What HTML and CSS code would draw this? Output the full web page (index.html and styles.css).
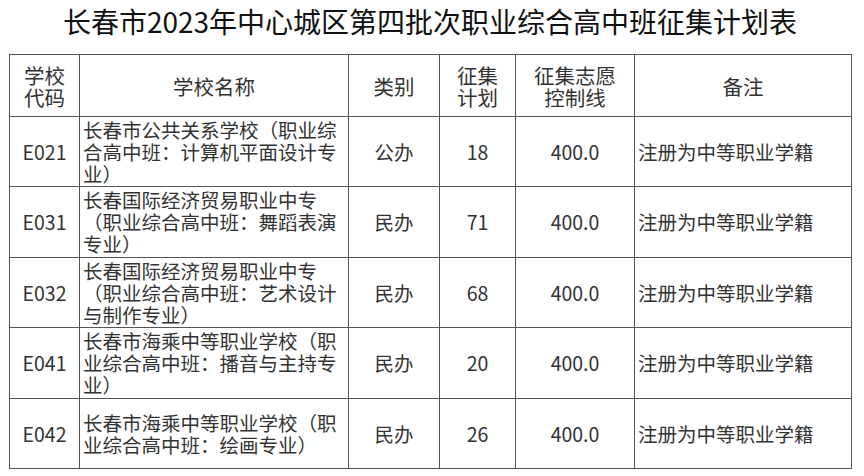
FILE: index.html
```html
<!DOCTYPE html>
<html lang="zh-CN">
<head>
<meta charset="utf-8">
<title>征集计划表</title>
<link rel="stylesheet" href="styles.css">
</head>
<body>
<div class="page">
  <h1 class="title">长春市2023年中心城区第四批次职业综合高中班征集计划表</h1>
  <table class="plan">
    <colgroup>
      <col class="c-code"><col class="c-name"><col class="c-type"><col class="c-plan"><col class="c-line"><col class="c-note">
    </colgroup>
    <thead>
      <tr class="head">
        <th>学校<br>代码</th>
        <th>学校名称</th>
        <th>类别</th>
        <th>征集<br>计划</th>
        <th>征集志愿<br>控制线</th>
        <th>备注</th>
      </tr>
    </thead>
    <tbody>
      <tr class="r-a">
        <td class="ctr">E021</td>
        <td class="name">长春市公共关系学校（职业综合高中班：计算机平面设计专业）</td>
        <td class="ctr">公办</td>
        <td class="ctr">18</td>
        <td class="ctr">400.0</td>
        <td class="note">注册为中等职业学籍</td>
      </tr>
      <tr class="r-b">
        <td class="ctr">E031</td>
        <td class="name">长春国际经济贸易职业中专（职业综合高中班：舞蹈表演专业）</td>
        <td class="ctr">民办</td>
        <td class="ctr">71</td>
        <td class="ctr">400.0</td>
        <td class="note">注册为中等职业学籍</td>
      </tr>
      <tr class="r-a">
        <td class="ctr">E032</td>
        <td class="name">长春国际经济贸易职业中专（职业综合高中班：艺术设计与制作专业）</td>
        <td class="ctr">民办</td>
        <td class="ctr">68</td>
        <td class="ctr">400.0</td>
        <td class="note">注册为中等职业学籍</td>
      </tr>
      <tr class="r-b">
        <td class="ctr">E041</td>
        <td class="name">长春市海乘中等职业学校（职业综合高中班：播音与主持专业）</td>
        <td class="ctr">民办</td>
        <td class="ctr">20</td>
        <td class="ctr">400.0</td>
        <td class="note">注册为中等职业学籍</td>
      </tr>
      <tr class="r-a">
        <td class="ctr">E042</td>
        <td class="name">长春市海乘中等职业学校（职业综合高中班：绘画专业）</td>
        <td class="ctr">民办</td>
        <td class="ctr">26</td>
        <td class="ctr">400.0</td>
        <td class="note">注册为中等职业学籍</td>
      </tr>
    </tbody>
  </table>
</div>
</body>
</html>
```
FILE: styles.css
```css
html, body {
  margin: 0;
  padding: 0;
  background: #fff;
}
body {
  font-family: "Noto Sans CJK SC", "Noto Sans", sans-serif;
  color: #333;
}
.page {
  width: 842px;
  margin-left: 9px;
}
.title {
  margin: 0 0 12px 0;
  font-size: 28px;
  line-height: 42px;
  font-weight: 400;
  text-align: center;
  color: #111;
  white-space: nowrap;
}
.plan {
  width: 842px;
  border-collapse: collapse;
  table-layout: fixed;
}
.c-code { width: 70px; }
.c-name { width: 269px; }
.c-type { width: 91px; }
.c-plan { width: 76px; }
.c-line { width: 119px; }
.c-note { width: 217px; }
.plan th, .plan td {
  border: 1px solid #555;
  padding: 0 3px;
  vertical-align: middle;
}
.plan th {
  font-weight: 400;
  font-size: 20.5px;
  line-height: 22px;
  text-align: center;
  height: 61px;
}
.plan td {
  font-size: 19.5px;
  line-height: 22px;
}
.r-a td { height: 69px; }
.r-b td { height: 70px; }
.ctr { text-align: center; }
.name { text-align: left; }
.note { text-align: left; padding-left: 1px; white-space: nowrap; }
```
